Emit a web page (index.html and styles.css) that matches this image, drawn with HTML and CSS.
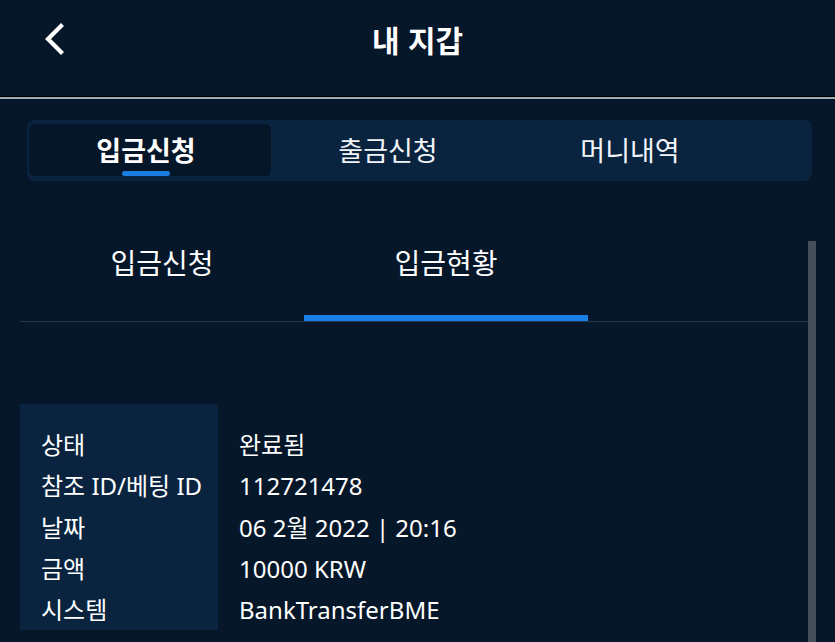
FILE: index.html
```html
<!DOCTYPE html>
<html lang="ko">
<head>
<meta charset="utf-8">
<title>내 지갑</title>
<link rel="stylesheet" href="styles.css">
</head>
<body>
<header class="topbar">
  <a class="back" href="#" aria-label="뒤로">
    <svg width="22" height="32" viewBox="0 0 22 32"><path d="M18 3 L5 16 L18 29" fill="none" stroke="#fff" stroke-width="4.2" stroke-linecap="square" stroke-linejoin="miter"/></svg>
  </a>
  <h1 class="title">내 지갑</h1>
  <span></span>
</header>

<nav class="segment">
  <div class="seg-tab active">입금신청</div>
  <div class="seg-tab">출금신청</div>
  <div class="seg-tab">머니내역</div>
</nav>

<section class="content">
  <div class="main">
    <div class="subtabs">
      <div class="subtab">입금신청</div>
      <div class="subtab active">입금현황</div>
    </div>
    <div class="details">
      <div class="labels">
        <div class="row">상태</div>
        <div class="row">참조 ID/베팅 ID</div>
        <div class="row">날짜</div>
        <div class="row">금액</div>
        <div class="row">시스템</div>
      </div>
      <div class="values">
        <div class="row">완료됨</div>
        <div class="row">112721478</div>
        <div class="row">06 2월 2022 | 20:16</div>
        <div class="row">10000 KRW</div>
        <div class="row">BankTransferBME</div>
      </div>
    </div>
  </div>
  <div class="scrollbar"></div>
</section>
</body>
</html>
```
FILE: styles.css
```css
* { box-sizing: border-box; }
html, body {
  margin: 0;
  padding: 0;
  background: #06172a;
  color: #fff;
  font-family: "Noto Sans", "Noto Sans CJK KR", sans-serif;
  height: 642px;
  overflow: hidden;
}
.topbar {
  display: grid;
  grid-template-columns: 1fr auto 1fr;
  align-items: center;
  height: 99px;
  padding-bottom: 20px;
  border-bottom: 2px solid #a3adb8;
  box-shadow: inset 0 -1px 0 #000;
}
.back {
  display: flex;
  padding-left: 43px;
}
.title {
  margin: 0;
  font-size: 30px;
  font-weight: 700;
  font-family: "Noto Sans CJK KR", sans-serif;
  line-height: 40px;
}
.segment {
  display: flex;
  margin: 21px 0 0 27px;
  width: 785px;
  height: 61px;
  padding: 4px 2px 5px;
  background: #0a2440;
  border-radius: 8px;
}
.seg-tab {
  position: relative;
  width: 242px;
  display: flex;
  align-items: center;
  justify-content: center;
  font-family: "Noto Sans CJK KR", sans-serif;
  font-size: 27px;
  font-weight: 400;
  color: #f2f5f8;
  padding: 0 8px 2px 0;
  border-radius: 6px;
}
.seg-tab.active {
  background: #061629;
  font-weight: 700;
  color: #fff;
}
.seg-tab.active::after {
  content: "";
  position: absolute;
  left: 93px;
  bottom: 0;
  width: 48px;
  height: 5px;
  border-radius: 3px;
  background: #1a7de0;
}
.content {
  display: flex;
  margin-top: 60px;
  height: 401px;
}
.main {
  flex: 1;
  padding-left: 20px;
}
.scrollbar {
  width: 8px;
  margin-right: 19px;
  background: #444e5b;
}
.subtabs {
  display: flex;
  height: 81px;
  border-bottom: 1px solid #27374a;
  margin-right: -2px;
}
.subtab {
  position: relative;
  width: 284px;
  text-align: center;
  font-family: "Noto Sans CJK KR", sans-serif;
  font-size: 28px;
  line-height: 38px;
  padding-top: 2px;
  color: #fff;
}
.subtab.active::after {
  content: "";
  position: absolute;
  left: 0;
  right: 0;
  bottom: 0;
  height: 6px;
  background: #1a80e6;
}
.details {
  display: flex;
  margin-top: 82px;
  font-size: 24px;
}
.labels {
  width: 198px;
  padding: 20px 0 0 21px;
  background: #0a2440;
}
.values {
  padding: 20px 0 0 21px;
}
.row {
  line-height: 41.25px;
  white-space: nowrap;
}
.labels .row:last-child { height: 41.25px; }
```
